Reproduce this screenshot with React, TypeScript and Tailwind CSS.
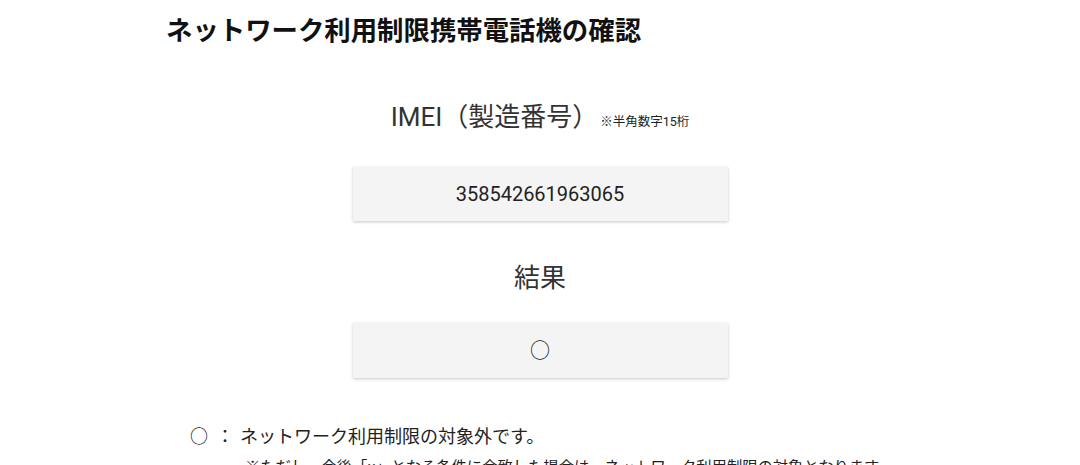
export default function App() {
  const font = { fontFamily: "Roboto, 'Noto Sans CJK JP', sans-serif" };
  return (
    <div className="w-[1080px] h-[465px] overflow-hidden bg-white text-[#333]" style={font}>
      <div className="w-[750px] mx-auto pt-[13px]">
        <h1 className="text-[26.4px] leading-[36px] font-bold text-[#111] ml-px">
          ネットワーク利用制限携帯電話機の確認
        </h1>

        <div className="mt-[50px] flex justify-center items-baseline">
          <span className="text-[26px] leading-[36px] text-[#333]">IMEI（製造番号）</span>
          <span className="text-[12.5px] text-[#222] ml-[2px]">※半角数字15桁</span>
        </div>

        <div className="mt-[32px] mx-auto w-[375px] h-[54px] bg-[#f4f4f4] shadow-[0_1px_3px_rgba(0,0,0,0.22)] flex items-center justify-center text-[20px] text-[#222]">
          358542661963065
        </div>

        <div className="mt-[39px] text-center text-[26px] leading-[36px] text-[#333]">結果</div>

        <div className="mt-[27px] mx-auto w-[375px] h-[55px] bg-[#f4f4f4] shadow-[0_1px_3px_rgba(0,0,0,0.22)] flex items-center justify-center text-[20px] text-[#222]">
          ○
        </div>

        <div className="mt-[45px] ml-[25px] text-[18px] leading-[28px] text-[#222]">
          <div className="flex">
            <span>○</span>
            <span className="ml-[8px]">：</span>
            <span className="ml-[6px]">ネットワーク利用制限の対象外です。</span>
          </div>
          <div className="ml-[55px] mt-[4px] text-[15.3px] leading-[24px]">
            ※ただし、今後「×」となる条件に合致した場合は、ネットワーク利用制限の対象となります。
          </div>
        </div>
      </div>
    </div>
  );
}
